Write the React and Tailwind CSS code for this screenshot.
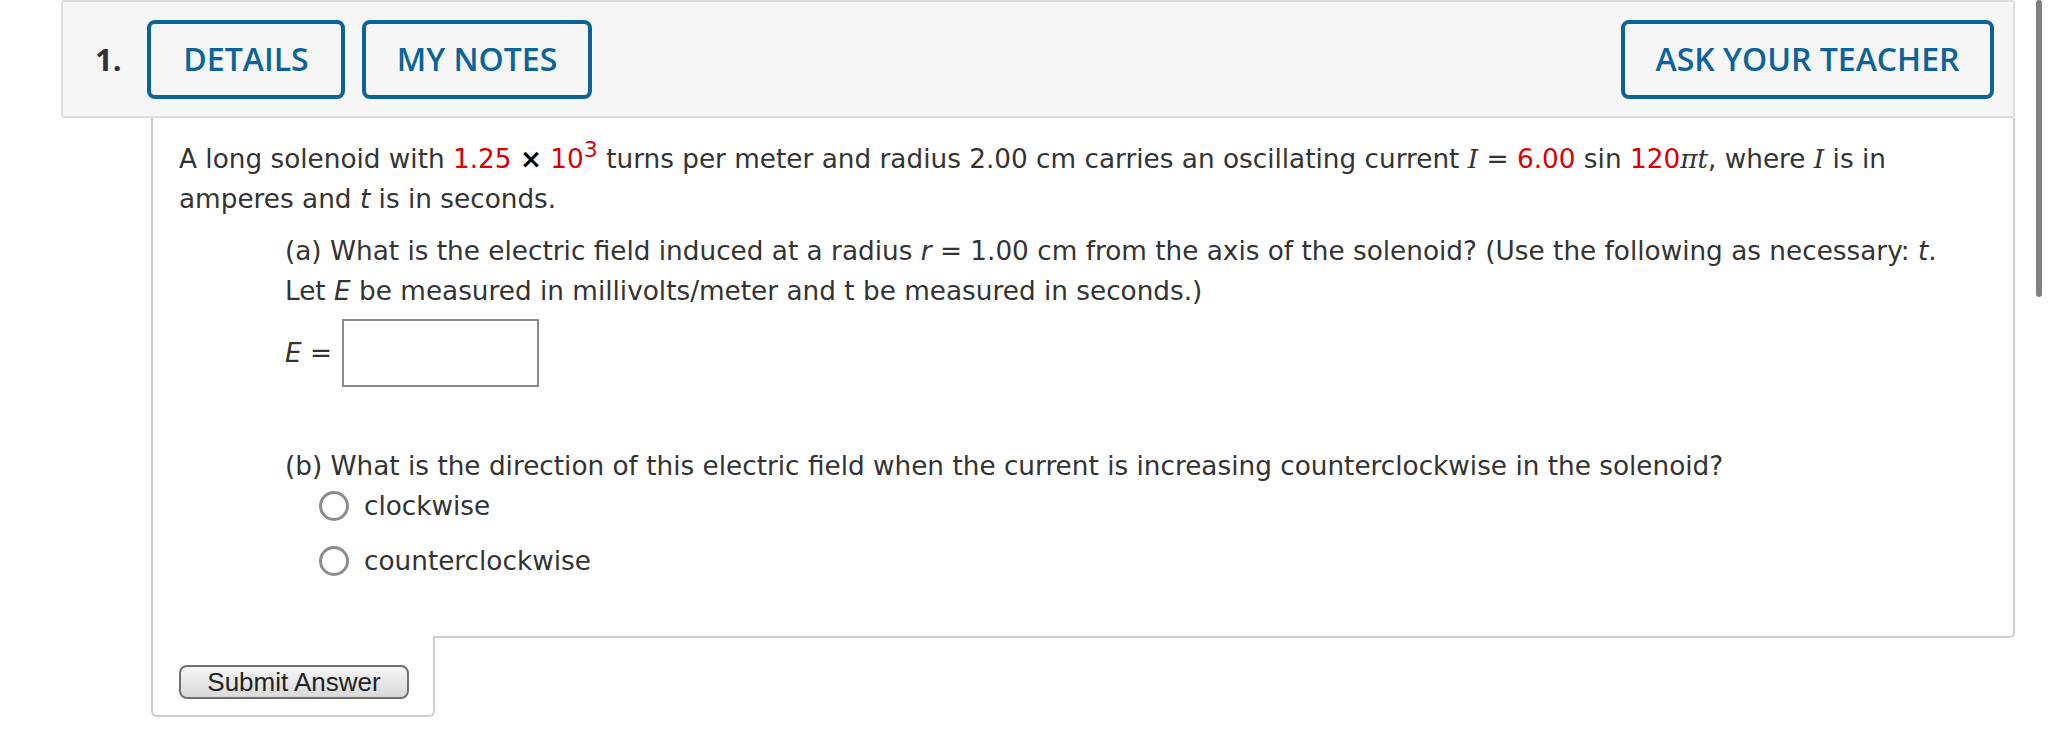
import React from 'react'

const sans = "font-['DejaVu_Sans',Verdana,sans-serif]"
const ui = "font-['Open_Sans',sans-serif]"
const mathSerif = "font-['DejaVu_Serif',serif]"

function TabButton({ label, width }) {
  return (
    <button
      className={`${ui} ${width} h-[79px] shrink-0 flex items-center justify-center rounded-[8px] border-4 border-[#0b639b] bg-[#f6f6f6] text-[32px] font-semibold text-[#0b639b]`}
    >
      {label}
    </button>
  )
}

function Radio({ label }) {
  return (
    <label className="flex items-center h-[40px] pl-[34px]">
      <span className="w-[30px] h-[30px] rounded-full border-[3px] border-[#8c8c8c] bg-white shrink-0" />
      <span className="ml-[15px]">{label}</span>
    </label>
  )
}

export default function App() {
  return (
    <div className="relative w-[2048px] h-[730px] bg-white overflow-hidden">
      <div className="ml-[61px] w-[1954px]">
        {/* question header */}
        <div className="h-[118px] flex items-center border-2 border-[#dddddd] bg-[#f6f6f6] rounded-[3px] pl-[32px] pr-[19px]">
          <span className={`${ui} w-[52px] text-[31px] font-bold text-[#333333]`}>1.</span>
          <TabButton label="DETAILS" width="w-[198px]" />
          <div className="ml-[17px]">
            <TabButton label="MY NOTES" width="w-[230px]" />
          </div>
          <div className="ml-auto">
            <TabButton label="ASK YOUR TEACHER" width="w-[373px]" />
          </div>
        </div>

        {/* question body */}
        <div className="ml-[90px] w-[1864px]">
          <div
            className={`${sans} border-x-2 border-b-2 border-[#cccccc] rounded-br-[6px] pl-[26px] pt-[21px] pb-[55px] text-[26.3px] leading-[40px] text-[#333333] whitespace-nowrap`}
          >
            <p>
              A long solenoid with <span className="text-[#dd0000]">1.25</span>{' '}
              <span className="font-bold text-black">×</span>{' '}
              <span className="text-[#dd0000]">
                10<sup className="text-[22px]">3</sup>
              </span>{' '}
              turns per meter and radius 2.00 cm carries an oscillating current{' '}
              <i className={mathSerif}>I</i> ={' '}
              <span className="text-[#dd0000]">6.00</span> sin{' '}
              <span className="text-[#dd0000]">120</span>
              <i className={mathSerif}>πt</i>, where{' '}
              <i className={mathSerif}>I</i> is in
              <br />
              amperes and <i>t</i> is in seconds.
            </p>

            <div className="pl-[106px]">
              <p className="mt-[12px]">
                (a) What is the electric field induced at a radius <i>r</i> = 1.00 cm from the axis of
                the solenoid? (Use the following as necessary: <i>t</i>.
                <br />
                Let <i>E</i> be measured in millivolts/meter and t be measured in seconds.)
              </p>

              <div className="mt-[8px] flex items-center">
                <span>
                  <i>E</i> =
                </span>
                <div className="ml-[10px] w-[197px] h-[68px] border-2 border-[#8a8a8a] bg-white" />
              </div>

              <p className="mt-[59px]">
                (b) What is the direction of this electric field when the current is increasing
                counterclockwise in the solenoid?
              </p>
              <Radio label="clockwise" />
              <div className="mt-[15px]">
                <Radio label="counterclockwise" />
              </div>
            </div>
          </div>

          {/* submit tab */}
          <div className="-mt-[2px] w-[284px] bg-white border-x-2 border-b-2 border-[#cccccc] rounded-b-[6px] pl-[26px] pt-[29px] pb-[16px]">
            <button className="font-['Liberation_Sans',Arial,sans-serif] w-[230px] h-[34px] flex items-center justify-center rounded-[8px] border-2 border-[#707070] bg-gradient-to-b from-[#f6f6f6] to-[#d9d9d9] text-[26px] leading-none text-[#222222]">
              Submit Answer
            </button>
          </div>
        </div>
      </div>

      {/* scrollbar */}
      <div className="absolute left-[2036px] top-0 w-[6px] h-[297px] rounded-full bg-[#808080]" />
    </div>
  )
}
